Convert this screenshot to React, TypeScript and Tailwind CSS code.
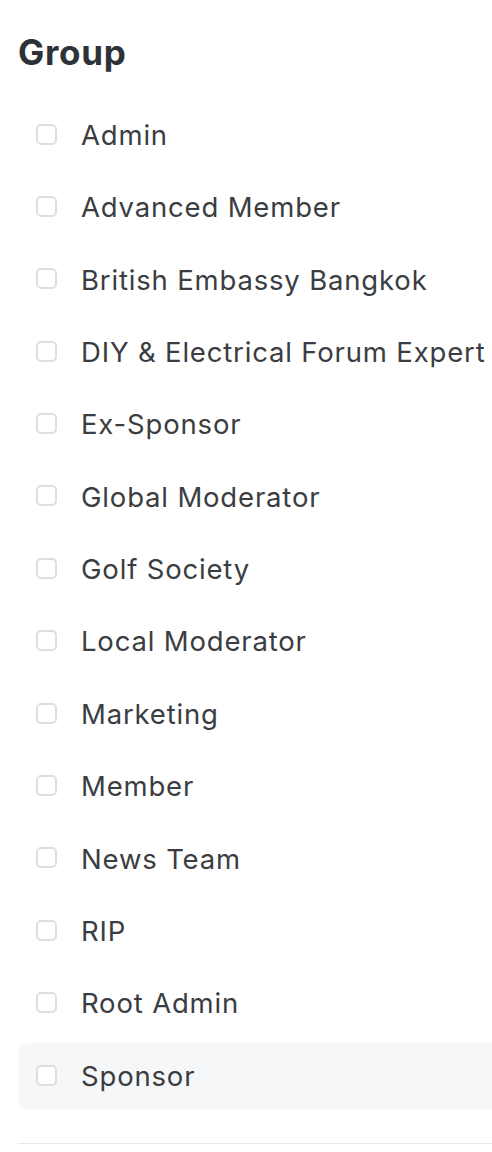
const groups = [
    "Admin",
    "Advanced Member",
    "British Embassy Bangkok",
    "DIY & Electrical Forum Expert",
    "Ex-Sponsor",
    "Global Moderator",
    "Golf Society",
    "Local Moderator",
    "Marketing",
    "Member",
    "News Team",
    "RIP",
    "Root Admin",
    "Sponsor",
];

const App: React.FC = () => {
    return (
        <div className="min-h-[1152px] w-[492px] overflow-hidden bg-white pl-[18px] font-['Inter','Noto_Sans',sans-serif]">
            <h2 className="pt-[30px] text-[35px] font-bold leading-[44px] tracking-[0.02em] text-[#2e3236]">Group</h2>
            <ul className="mt-[28px] flex w-[520px] flex-col gap-[5.4px]">
                {groups.map((name, i) => (
                    <li
                        key={name}
                        className={
                            "flex h-[67px] items-center rounded-xl pl-[18px] " +
                            (i === groups.length - 1 ? "bg-[#f6f7f9]" : "")
                        }
                    >
                        <span className="mb-[3px] h-[21px] w-[21px] shrink-0 rounded-[5px] border-2 border-[#dcdee2] bg-white" />
                        <span className="ml-[24px] whitespace-nowrap text-[27.5px] leading-none tracking-[0.03em] text-[#3a3d42]">
                            {name}
                        </span>
                    </li>
                ))}
            </ul>
            <div className="mt-[33px] h-px w-[520px] bg-[#e6e8eb]" />
        </div>
    );
};

export default App;
